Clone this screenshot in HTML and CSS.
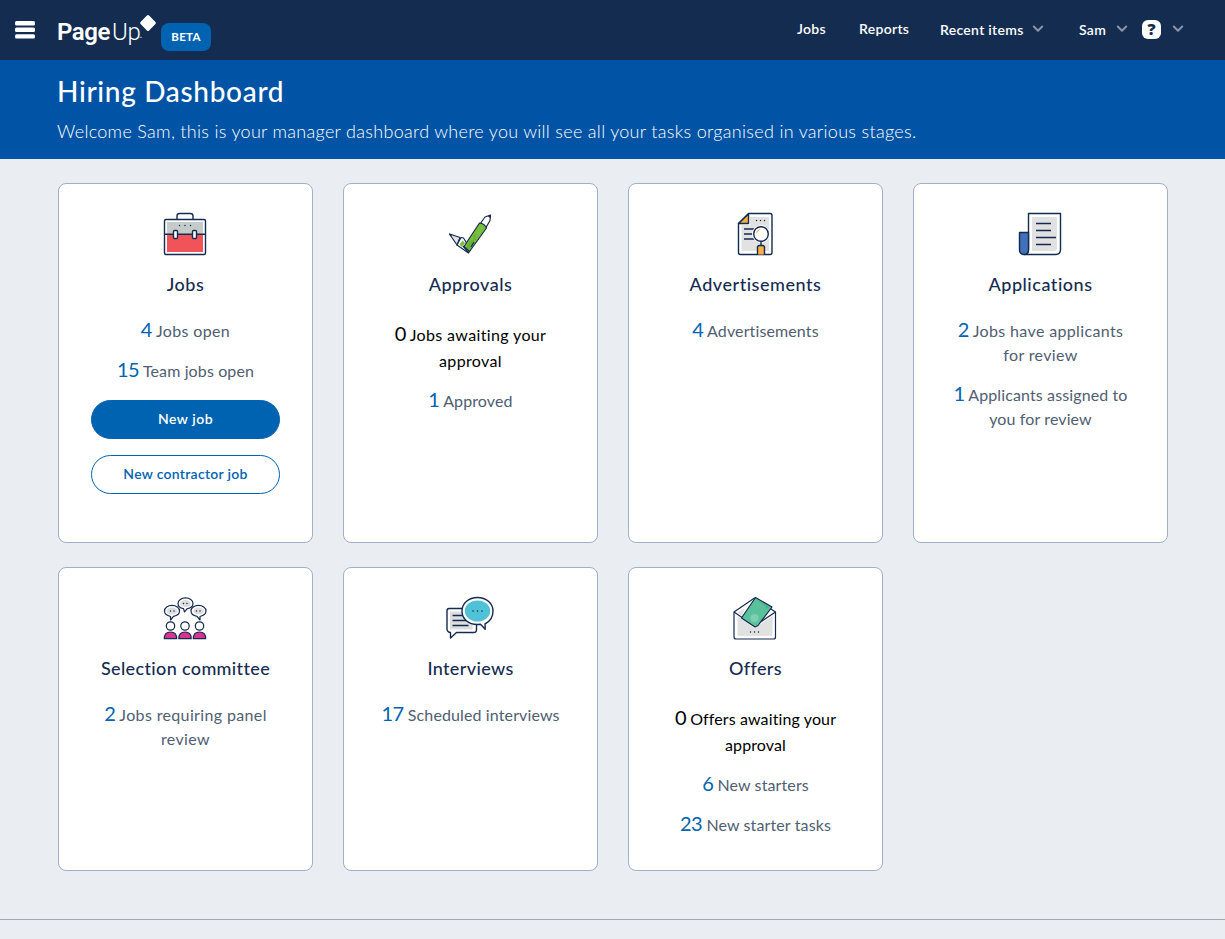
FILE: index.html
```html
<!DOCTYPE html>
<html lang="en">
<head>
<meta charset="utf-8">
<title>Hiring Dashboard</title>
<link rel="stylesheet" href="styles.css">
</head>
<body>
<header class="topbar">
  <svg class="burger" width="20" height="18" viewBox="0 0 20 18" fill="#fff"><rect width="20" height="4.4" rx="1.5"/><rect y="6.6" width="20" height="4.4" rx="1.5"/><rect y="13.2" width="20" height="4.4" rx="1.5"/></svg>
  <div class="logo"><span class="logo-page">Page</span><span class="logo-up">Up</span><span class="logo-tm">™</span>
    <svg class="logo-mark" width="18" height="18" viewBox="0 0 18 18"><rect x="3" y="3" width="12" height="12" rx="1.5" transform="rotate(45 9 9)" fill="#fff"/></svg>
  </div>
  <span class="beta">BETA</span>
  <nav class="nav">
    <a class="nav-jobs">Jobs</a>
    <a class="nav-reports">Reports</a>
    <a class="nav-recent">Recent items</a>
    <svg class="chev chev-recent" width="12" height="8" viewBox="0 0 12 8"><path d="M1.8 1.5 6 5.7l4.2-4.2"/></svg>
    <a class="nav-sam">Sam</a>
    <svg class="chev" width="12" height="8" viewBox="0 0 12 8"><path d="M1.8 1.5 6 5.7l4.2-4.2"/></svg>
    <span class="help">?</span>
    <svg class="chev" width="12" height="8" viewBox="0 0 12 8"><path d="M1.8 1.5 6 5.7l4.2-4.2"/></svg>
  </nav>
</header>
<section class="hero">
  <h1>Hiring Dashboard</h1>
  <p>Welcome Sam, this is your manager dashboard where you will see all your tasks organised in various stages.</p>
</section>
<main class="grid">
  <article class="card">
    <svg class="icon" viewBox="0 0 71 65">
      <path d="M27 19v-3a2.500 2.500 0 0 1 2.500-2.500h11a2.500 2.500 0 0 1 2.500 2.500v3"/>
      <rect x="14.500" y="19.500" width="41" height="35" rx="1.500" fill="#fff"/>
      <path class="n" fill="#c5cbc8" d="M17 22h36v12H17z"/><path class="n" fill="#f15458" d="M17 35h36v17H17z"/>
      <path d="M14.500 34.300h41"/><rect x="23.500" y="30.500" width="4" height="8" rx="1" fill="#fff"/><rect x="42.500" y="30.500" width="4" height="8" rx="1" fill="#fff"/>
      <path class="dots" d="M29.500 25.500h0M35 25.500h0M40.500 25.500h0"/>
    </svg>
    <h2>Jobs</h2>
    <p><b>4</b> Jobs open</p>
    <p class="snug"><b>15</b> Team jobs open</p>
    <a class="btn primary">New job</a>
    <a class="btn">New contractor job</a>
  </article>
  <article class="card">
    <svg class="icon thin" viewBox="0 0 71 65">
      <path fill="#e4e4e4" d="M14.500 34 25 37.500 22 45z"/>
      <path fill="#fff" d="m22 45 4-7.500 2.500.500 7 11.500-2 3.500z"/>
      <path class="n" fill="#79bf3d" d="m24.500 44.500 3-4 2.500 2.500-3 4z"/>
      <path fill="#fff" d="m45 24 5-7 5.500-2-.500 5.500-4 7z"/>
      <path fill="#79bf3d" d="M29 46.500 44.500 23q5 .500 7 5L34.500 51.500z"/>
      <path class="n" fill="#5aa326" d="m31 48 4-7 3-1 1-4.500 3-1.500-8 16z" opacity=".55"/>
      <path d="m36 47 3-5M40.500 39v.2M28 46l5.500 6.500"/>
      <path class="n" fill="#142b50" d="m13.800 33.500 3.700 1-2 2zM55.900 14.800l-.5 3.500-2.600-2z"/>
    </svg>
    <h2>Approvals</h2>
    <p class="plain"><b>0</b> Jobs awaiting your<br>approval</p>
    <p class="snug"><b>1</b> Approved</p>
  </article>
  <article class="card">
    <svg class="icon" viewBox="0 0 71 65">
      <path fill="#fff" d="M28.500 13.500H50a2 2 0 0 1 2 2v37a2 2 0 0 1-2 2H20.500a2 2 0 0 1-2-2V23.500z"/>
      <path class="n" fill="#e2e2e2" d="M30 17h19v34H21.500V25H30z"/>
      <path fill="#fbb040" d="M28.500 14v9.500h-10z"/>
      <path class="dots" d="M36.500 20.500h0M40.500 20.500h0M44.500 20.500h0"/>
      <path d="M24 29h12M24 34h10M24 39h12"/>
      <circle cx="41" cy="34" r="9" fill="#fff" stroke="none"/><circle cx="41" cy="34" r="7.300" fill="#fff"/>
      <path class="n" fill="#fbb040" d="M36 34q.5-4.500 5-5-2.500 1.500-5 5z"/>
      <path d="M41 41.500v4"/><path class="n" fill="#fbaf45" d="M37.500 54.500V48a2 2 0 0 1 2-2.500h3a2 2 0 0 1 2 2.500v6.500z"/><path d="M37.500 55v-7a2 2 0 0 1 2-2.500h3a2 2 0 0 1 2 2.500v7"/>
    </svg>
    <h2>Advertisements</h2>
    <p class="snug"><b>4</b> Advertisements</p>
  </article>
  <article class="card">
    <svg class="icon" viewBox="0 0 71 65">
      <path fill="#fff" d="M23.500 13.500h32v36q0 5-5 5h-31q4 0 4-5z"/>
      <path class="n" fill="#e1e1e1" d="M27 17h25v31q0 3-3 3H27z"/>
      <path fill="#4271b9" d="M14.500 32.500h9v17q0 5-4.500 5t-4.500-5z"/>
      <path d="M31 23.500h15M31 30.500h15M31 37.500h20M31 44.500h15"/>
    </svg>
    <h2>Applications</h2>
    <p><b>2</b> Jobs have applicants<br>for review</p>
    <p class="snug"><b>1</b> Applicants assigned to<br>you for review</p>
  </article>
  <article class="card">
    <svg class="icon thin" viewBox="0 -1 71 65">
      <g fill="#fff"><path d="M20.500 31.500V35l3-3.700q6-1 6-5.300c0-3.500-3.500-5.600-7.500-5.600s-7.500 2.100-7.500 5.600q0 4 6 5.500z"/><path d="M50 31.500V35l-3-3.700q-6-1-6-5.300c0-3.500 3.500-5.600 7.500-5.600s7.500 2.100 7.500 5.600q0 4-6 5.500z"/><path d="M33.500 23.700 34.500 27l2.500-3.200q6-1 6-5.300c0-3.500-3.500-5.600-7.500-5.600s-7.500 2.100-7.500 5.600q0 4 5.500 5.200z"/></g>
      <g class="n" fill="#dedede"><ellipse cx="22" cy="26" rx="5.400" ry="3.500"/><ellipse cx="48.500" cy="26" rx="5.400" ry="3.500"/><ellipse cx="35.500" cy="18.500" rx="5.400" ry="3.500"/></g>
      <path class="dots" d="M20.500 26h0M24 26h0M46.500 26h0M50 26h0M33.500 18.500h0M37 18.500h0"/>
      <g fill="#fff"><circle cx="20.500" cy="41" r="4.200"/><circle cx="35" cy="41" r="4.200"/><circle cx="49.500" cy="41" r="4.200"/></g>
      <path fill="#de3290" d="M14.300 53.700q0-6.700 6.200-6.700t6.200 6.700zM28.800 53.700q0-6.700 6.200-6.700t6.200 6.700zM43.300 53.700q0-6.700 6.200-6.700t6.200 6.700z"/>
    </svg>
    <h2 class="tight">Selection committee</h2>
    <p><b>2</b> Jobs requiring panel<br>review</p>
  </article>
  <article class="card">
    <svg class="icon" viewBox="0.500 -1 71 65">
      <path fill="#fff" d="M14.500 23.500h25a2.500 2.500 0 0 1 2.500 2.500v19a2.500 2.500 0 0 1-2.500 2.500H22L16 53v-5.500a3.500 3.500 0 0 1-3.500-3.500V26q0-2.500 2-2.500z"/>
      <path class="n" fill="#dedede" d="M15.500 26.500H38v18H15.500z"/>
      <path d="M18 30.500h10M18 35.500h14M18 40.500h16"/>
      <path fill="#fff" d="M50.500 39q8-4 8-13c0-8-7-13.500-15.500-13.500S27.500 18 27.500 26 34 39.500 43 39.500l3-.300 4.700 5z"/>
      <ellipse class="n" fill="#4fc2d7" cx="43" cy="26" rx="12.700" ry="10.500"/>
      <path class="dots" d="M38.500 26h0M43 26h0M47.500 26h0"/>
    </svg>
    <h2 class="tight">Interviews</h2>
    <p class="snug"><b>17</b> Scheduled interviews</p>
  </article>
  <article class="card">
    <svg class="icon thin" viewBox="0.500 -1 71 65">
      <path fill="#fff" d="M14.500 27 35 13l21 14v25a2 2 0 0 1-2 2H16.500a2 2 0 0 1-2-2z"/>
      <path class="n" fill="#e1e1e1" d="M18 31l17 12 18-12v20H18zM18 28l7-5-2 8z"/>
      <path d="m14.500 27 20.500 14L56 27"/>
      <path fill="#5bc19b" d="M36 12.500 52.500 22 38.500 40.500l-3 1.500L22 33z"/>
      <circle class="n" cx="35" cy="33" r="4" fill="#7bd0b2"/><path class="n" fill="#47b38b" d="m36 14 14 8-5 3 2-3z"/>
      <path class="dots" d="M31 47h0M35 47h0M39 47h0"/>
    </svg>
    <h2 class="tight">Offers</h2>
    <p class="plain snug"><b>0</b> Offers awaiting your<br>approval</p>
    <p class="snug"><b>6</b> New starters</p>
    <p class="snug"><b>23</b> New starter tasks</p>
  </article>
</main>
<footer class="footer"></footer>
</body>
</html>
```
FILE: styles.css
```css
* { box-sizing: border-box; }
body { margin: 0; height: 939px; overflow: hidden; background: #eaeef3; font-family: Lato, "Open Sans", sans-serif; }
.topbar { height: 60px; background: #152c51; color: #fff; display: flex; align-items: center; padding-left: 15px; }
.burger { width: 20px; height: 18px; }
.logo { position: relative; width: 103px; height: 60px; margin-left: 22px; line-height: 65px; font-family: Roboto, sans-serif; font-size: 24px; white-space: nowrap; display: flex; letter-spacing: -.4px; }
.logo-page { font-weight: 600; width: 55px; }
.logo-up { font-weight: 300; width: 27px; }
.logo-tm { font-size: 5px; line-height: 76px; }
.logo-mark { position: absolute; left: 82px; top: 14px; }
.beta { width: 50px; height: 28px; margin: 14px 0 0 1px; border-radius: 8px; background: #0063b1; font-size: 11.500px; font-weight: 700; line-height: 28px; letter-spacing: .3px; text-align: center; }
.nav { margin-left: auto; width: 428px; height: 60px; padding-bottom: 2px; display: flex; align-items: center; font-size: 14px; font-weight: 600; letter-spacing: .3px; white-space: nowrap; }
.nav a { line-height: 20px; }
.nav-jobs { width: 62px; }
.nav-reports { width: 81px; }
.nav-recent { width: 92px; padding-top: 1px; }
.nav-sam { width: 37px; padding-top: 1px; }
.chev { fill: none; stroke: #8793a9; stroke-width: 2; stroke-linecap: round; stroke-linejoin: round; }
.chev-recent { margin-right: 35px; }
.help { width: 19px; height: 19px; margin: 0 11px 0 14px; border-radius: 6px; background: #fff; color: #152c51; font-family: "Open Sans", sans-serif; font-weight: 800; font-size: 16px; line-height: 19px; text-align: center; letter-spacing: 0; }
.hero { height: 99px; background: #0053a5; color: #fff; padding: 11px 57px; }
.hero h1 { margin: 0; font-size: 28px; line-height: 40px; font-weight: 500; letter-spacing: .68px; white-space: nowrap; }
.hero p { margin: 8px 0 0; font-size: 18px; line-height: 24px; font-weight: 300; letter-spacing: .3px; white-space: nowrap; }
.grid { display: grid; grid-template-columns: repeat(4, 255px); grid-template-rows: 360px 304px; gap: 24px 30px; padding: 24px 0 48px 58px; }
.card { display: flex; flex-direction: column; align-items: center; padding-top: 16px; border: 1px solid #9fb1c6; border-radius: 8px; background: #fff; color: #4f5e72; text-align: center; }
.icon { width: 71px; height: 65px; flex: none; fill: none; stroke: #142b50; stroke-width: 1.400; stroke-linejoin: round; }
.icon.thin { stroke-width: 1.200; }
.icon .n { stroke: none; }
.icon .dots { stroke-width: 1.500; stroke-linecap: round; }
.card h2 { margin: 7px 0 23px; color: #152c51; font-size: 18px; line-height: 24px; font-weight: 500; letter-spacing: .53px; white-space: nowrap; }
.card .tight { letter-spacing: .36px; }
.card p { margin: 0 0 16px; font-size: 16px; line-height: 24px; letter-spacing: .36px; white-space: nowrap; }
.card .snug { letter-spacing: .12px; }
.card p b { color: #0063b1; font-size: 20px; line-height: 20px; font-weight: 400; letter-spacing: -.5px; }
.card .plain { margin: 3px 0 15px; line-height: 26px; color: #000; }
.card .plain b { color: #000; }
.btn { width: 189px; height: 39px; margin: 1px 0 15px; border: 1px solid #0063b1; border-radius: 20px; color: #0063b1; font-size: 14px; font-weight: 600; line-height: 36px; letter-spacing: .28px; }
.primary { background: #0063b1; color: #fff; letter-spacing: .5px; }
.footer { border-top: 1px solid #9faab5; }
```
